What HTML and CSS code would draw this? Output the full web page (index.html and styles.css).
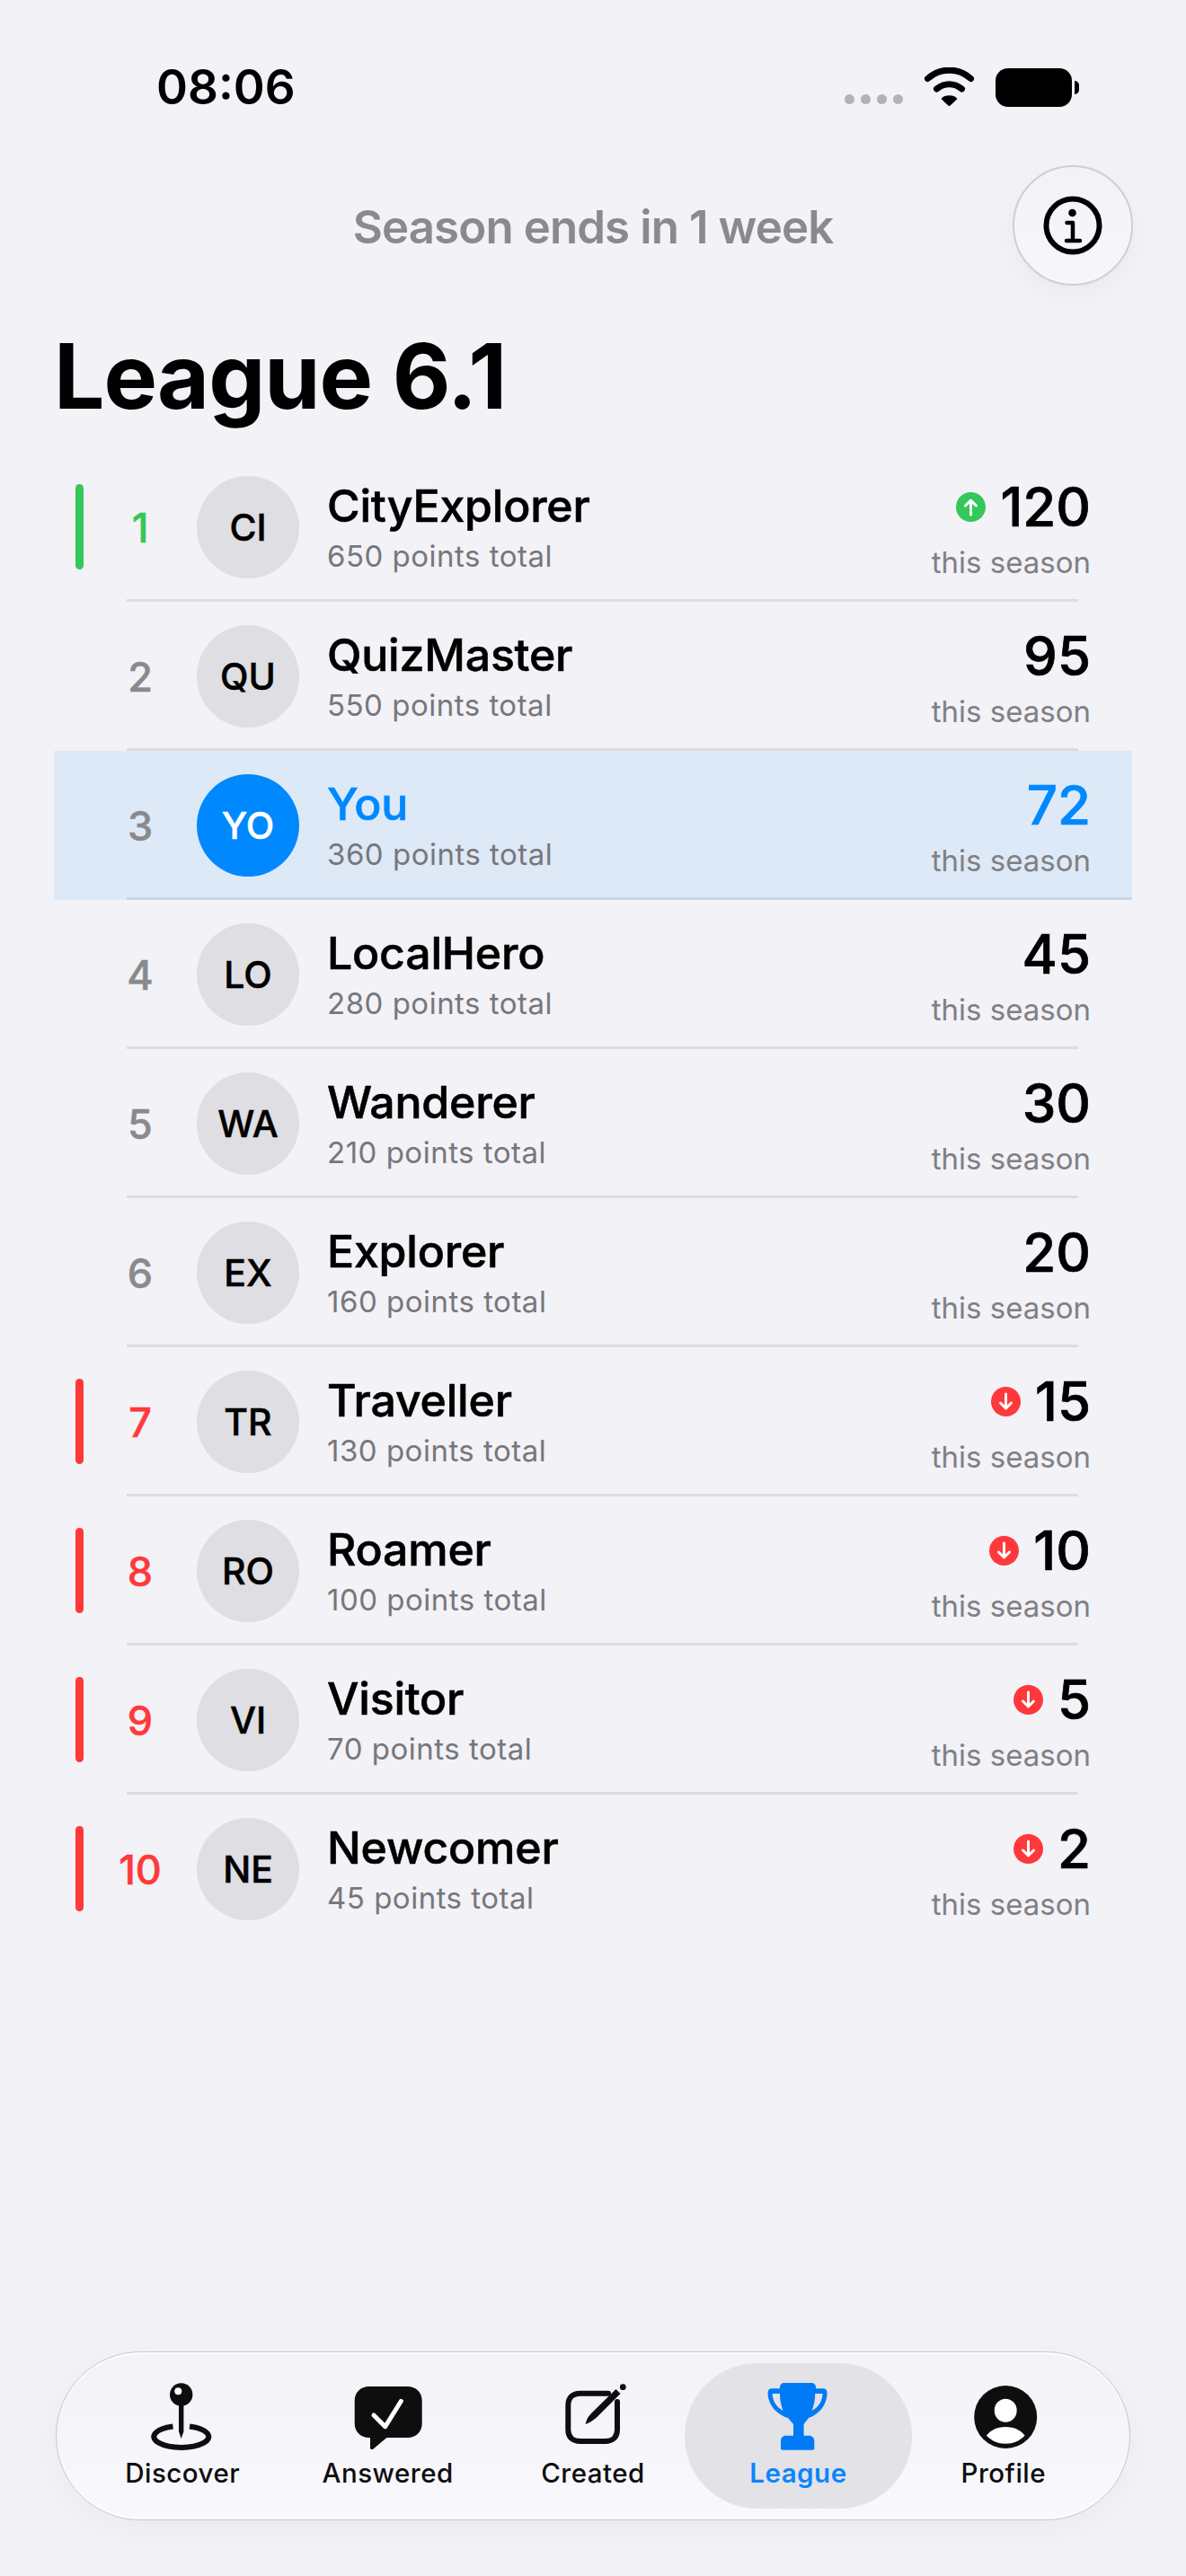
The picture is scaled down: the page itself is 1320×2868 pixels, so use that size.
FILE: index.html
```html
<!DOCTYPE html>
<html lang="en">
<head>
  <meta charset="UTF-8">
  <meta name="viewport" content="width=device-width, initial-scale=1.0">
  <title>League</title>
  <link rel="stylesheet" href="styles.css">
</head>
<body>

<div class="screen">
  <!-- Status bar -->
  <div class="status-bar">
    <span class="clock">08:06</span>
    <div class="status-icons">
      <div class="signal"><i></i><i></i><i></i><i></i></div>
      <svg class="wifi" viewBox="0 0 57 43">
        <path d="M4.500 12.500C18 0 39 0 52.500 12.500" fill="none" stroke="#000" stroke-width="7" stroke-linecap="round"/>
        <path d="M14.500 24C23 17 34 17 42.500 24" fill="none" stroke="#000" stroke-width="7" stroke-linecap="round"/>
        <path d="M28.500 42.500L20.500 35C24 31 33 31 36.500 35Z" fill="#000" stroke="#000" stroke-width="1.500" stroke-linejoin="round"/>
      </svg>
      <div class="battery"></div>
    </div>
  </div>

  <!-- Header -->
  <div class="top-row">
    <span class="season-ends">Season ends in 1 week</span>
    <div class="info-btn">
      <svg viewBox="0 0 66 66" width="66" height="66">
        <circle cx="33" cy="33" r="29.500" fill="none" stroke="#000" stroke-width="6"/>
        <circle cx="32.500" cy="19" r="4.300" fill="#000"/>
        <path d="M26.500 30H33V49M26 50H41" fill="none" stroke="#000" stroke-width="4.500" stroke-linecap="round" stroke-linejoin="round"/>
      </svg>
    </div>
  </div>

  <h1 class="title">League 6.1</h1>

  <!-- Standings -->
  <div class="rows">

    <div class="row promote">
      <div class="rank">1</div>
      <div class="avatar">CI</div>
      <div class="who"><div class="name">CityExplorer</div><div class="total">650 points total</div></div>
      <div class="score">
        <div class="score-line">
          <svg class="trend" viewBox="0 0 33 33"><circle cx="16.500" cy="16.500" r="16.500" fill="#34c759"/><path d="M16.500 25V9M10.500 15L16.500 9L22.500 15" fill="none" stroke="#fff" stroke-width="3" stroke-linecap="round" stroke-linejoin="round"/></svg>
          <span class="points">120</span>
        </div>
        <div class="season">this season</div>
      </div>
    </div>

    <div class="row">
      <div class="rank">2</div>
      <div class="avatar">QU</div>
      <div class="who"><div class="name">QuizMaster</div><div class="total">550 points total</div></div>
      <div class="score">
        <div class="score-line"><span class="points">95</span></div>
        <div class="season">this season</div>
      </div>
    </div>

    <div class="row me">
      <div class="rank">3</div>
      <div class="avatar">YO</div>
      <div class="who"><div class="name">You</div><div class="total">360 points total</div></div>
      <div class="score">
        <div class="score-line"><span class="points">72</span></div>
        <div class="season">this season</div>
      </div>
    </div>

    <div class="row">
      <div class="rank">4</div>
      <div class="avatar">LO</div>
      <div class="who"><div class="name">LocalHero</div><div class="total">280 points total</div></div>
      <div class="score">
        <div class="score-line"><span class="points">45</span></div>
        <div class="season">this season</div>
      </div>
    </div>

    <div class="row">
      <div class="rank">5</div>
      <div class="avatar">WA</div>
      <div class="who"><div class="name">Wanderer</div><div class="total">210 points total</div></div>
      <div class="score">
        <div class="score-line"><span class="points">30</span></div>
        <div class="season">this season</div>
      </div>
    </div>

    <div class="row">
      <div class="rank">6</div>
      <div class="avatar">EX</div>
      <div class="who"><div class="name">Explorer</div><div class="total">160 points total</div></div>
      <div class="score">
        <div class="score-line"><span class="points">20</span></div>
        <div class="season">this season</div>
      </div>
    </div>

    <div class="row relegate">
      <div class="rank">7</div>
      <div class="avatar">TR</div>
      <div class="who"><div class="name">Traveller</div><div class="total">130 points total</div></div>
      <div class="score">
        <div class="score-line">
          <svg class="trend" viewBox="0 0 33 33"><circle cx="16.500" cy="16.500" r="16.500" fill="#ff383c"/><path d="M16.500 8V24M10.500 18L16.500 24L22.500 18" fill="none" stroke="#fff" stroke-width="3" stroke-linecap="round" stroke-linejoin="round"/></svg>
          <span class="points">15</span>
        </div>
        <div class="season">this season</div>
      </div>
    </div>

    <div class="row relegate">
      <div class="rank">8</div>
      <div class="avatar">RO</div>
      <div class="who"><div class="name">Roamer</div><div class="total">100 points total</div></div>
      <div class="score">
        <div class="score-line">
          <svg class="trend" viewBox="0 0 33 33"><circle cx="16.500" cy="16.500" r="16.500" fill="#ff383c"/><path d="M16.500 8V24M10.500 18L16.500 24L22.500 18" fill="none" stroke="#fff" stroke-width="3" stroke-linecap="round" stroke-linejoin="round"/></svg>
          <span class="points">10</span>
        </div>
        <div class="season">this season</div>
      </div>
    </div>

    <div class="row relegate">
      <div class="rank">9</div>
      <div class="avatar">VI</div>
      <div class="who"><div class="name">Visitor</div><div class="total">70 points total</div></div>
      <div class="score">
        <div class="score-line">
          <svg class="trend" viewBox="0 0 33 33"><circle cx="16.500" cy="16.500" r="16.500" fill="#ff383c"/><path d="M16.500 8V24M10.500 18L16.500 24L22.500 18" fill="none" stroke="#fff" stroke-width="3" stroke-linecap="round" stroke-linejoin="round"/></svg>
          <span class="points">5</span>
        </div>
        <div class="season">this season</div>
      </div>
    </div>

    <div class="row relegate last">
      <div class="rank">10</div>
      <div class="avatar">NE</div>
      <div class="who"><div class="name">Newcomer</div><div class="total">45 points total</div></div>
      <div class="score">
        <div class="score-line">
          <svg class="trend" viewBox="0 0 33 33"><circle cx="16.500" cy="16.500" r="16.500" fill="#ff383c"/><path d="M16.500 8V24M10.500 18L16.500 24L22.500 18" fill="none" stroke="#fff" stroke-width="3" stroke-linecap="round" stroke-linejoin="round"/></svg>
          <span class="points">2</span>
        </div>
        <div class="season">this season</div>
      </div>
    </div>

  </div>

  <!-- Tab bar -->
  <div class="tabbar">
    <div class="tab">
      <svg class="tab-icon" viewBox="0 0 76 76">
        <circle cx="36.700" cy="13" r="12.700" fill="#0e0e0f"/>
        <circle cx="33.300" cy="9.300" r="4" fill="#fff"/>
        <path d="M34 24H39.400V54L36.700 62L34 54Z" fill="#0e0e0f"/>
        <path d="M27.500 48.500A30.500 12 0 1 0 46 48.500" fill="none" stroke="#0e0e0f" stroke-width="6"/>
      </svg>
      <span class="tab-label">Discover</span>
    </div>
    <div class="tab">
      <svg class="tab-icon" viewBox="0 0 76 76">
        <path d="M16.700 4H59.700C69 4 75.700 10.500 75.700 20V45C75.700 54.500 69 61 59.700 61H36.400L21.500 73.500C20 74.700 18 74 18 72V61H16.700C7.500 61 .7 54.500 .7 45V20C.7 10.500 7.500 4 16.700 4Z" fill="#0e0e0f"/>
        <path d="M22 36L34.700 48.700L52.400 20.300" fill="none" stroke="#fff" stroke-width="5" stroke-linecap="round" stroke-linejoin="round"/>
      </svg>
      <span class="tab-label">Answered</span>
    </div>
    <div class="tab">
      <svg class="tab-icon" viewBox="0 0 76 76">
        <path d="M55 11.700H24C15 11.700 10.300 16.500 10.300 25V52C10.300 60.500 15 65 24 65H51.500C60 65 65 60.500 65 52V21" fill="none" stroke="#0e0e0f" stroke-width="6" stroke-linecap="round"/>
        <path d="M29.500 46C31 40 33 37 37 33L63.500 7L68.500 12L42 38.500C38 42 35 44 29.500 46Z" fill="#0e0e0f"/>
        <circle cx="71.300" cy="4.700" r="3.400" fill="#0e0e0f"/>
      </svg>
      <span class="tab-label">Created</span>
    </div>
    <div class="tab active">
      <svg class="tab-icon" viewBox="0 0 76 76">
        <path fill-rule="evenodd" fill="#007bf5" d="M18 5C18 2 20 0 23 0H53C56 0 58 2 58 5V6.300H66C69 6.300 70.600 8 70.600 11C70.600 24 62 35 50 39L44.600 46V58.700H50C54 58.700 56.300 61 56.300 65V73C56.300 74 55.500 74.700 54.500 74.700H21C20 74.700 19 74 19 73V65C19 61 21 58.700 25 58.700H33V46L27 39C14 35 4.600 24 4.600 11C4.600 8 6 6.300 9 6.300H18ZM9.600 12H18C18 18 19 24 21.500 31C14 27 10 20 9.600 12ZM65.600 12H57.200C57.200 18 56.200 24 53.700 31C61.200 27 65.200 20 65.600 12Z"/>
      </svg>
      <span class="tab-label">League</span>
    </div>
    <div class="tab">
      <svg class="tab-icon" viewBox="0 0 76 76">
        <circle cx="40.200" cy="38" r="35" fill="#0e0e0f"/>
        <ellipse cx="40.200" cy="30.700" rx="12.500" ry="13" fill="#fff"/>
        <path d="M18.900 58.700C23 53 30 49 40.200 49C50.500 49 57.500 53 61.600 58.700C56 64.500 48.500 67.700 40.200 67.700C32 67.700 24.500 64.500 18.900 58.700Z" fill="#fff"/>
      </svg>
      <span class="tab-label">Profile</span>
    </div>
  </div>
</div>

</body>
</html>
```

FILE: styles.css
```css
* {
  box-sizing: border-box;
}

body {
  margin: 0;
  background-color: #f2f2f7;
  font-family: 'Inter', sans-serif;
  color: #000;
}

.screen {
  height: 2868px;
  padding: 0 60px;
  display: flex;
  flex-direction: column;
}

/* Status bar */
.status-bar {
  height: 184px;
  display: flex;
  justify-content: space-between;
  padding: 67px 67px 0 114px;
}

.clock {
  font-size: 53px;
  font-weight: 600;
  line-height: 60px;
}

.status-icons {
  display: flex;
  align-items: flex-start;
  padding-top: 8px;
}

.signal {
  display: flex;
  gap: 7px;
  margin-top: 30px;
  margin-right: 23px;
}

.signal i {
  width: 11px;
  height: 11px;
  border-radius: 50%;
  background-color: #b3b2b8;
}

.wifi {
  width: 57px;
  height: 43px;
  margin-right: 23px;
}

.battery {
  position: relative;
  width: 85px;
  height: 43px;
  margin-top: 1px;
  background-color: #000;
  border-radius: 14px;
}

.battery::after {
  content: '';
  position: absolute;
  left: 88px;
  top: 14px;
  width: 5px;
  height: 15px;
  background-color: #000;
  border-radius: 0 8px 8px 0;
}

/* Header */
.top-row {
  height: 134px;
  position: relative;
  display: flex;
  align-items: center;
  justify-content: center;
}

.season-ends {
  margin-top: 3px;
  font-size: 51px;
  font-weight: 600;
  letter-spacing: -0.9px;
  color: #8a8a8e;
}

.info-btn {
  position: absolute;
  right: -1px;
  top: 0;
  width: 134px;
  height: 134px;
  border-radius: 50%;
  background: linear-gradient(#f2f2f7, #f6f6fb);
  border: 2px solid #cfcfd3;
  box-shadow: 0 10px 30px rgba(0, 0, 0, 0.04);
  display: flex;
  align-items: center;
  justify-content: center;
}

.title {
  margin: 0;
  height: 186px;
  padding-top: 16px;
  font-size: 100px;
  font-weight: 700;
  line-height: 170px;
  letter-spacing: -1px;
}

/* Rows */
.row {
  position: relative;
  height: 166px;
  padding: 0 50px 0 159px;
  display: flex;
  align-items: center;
}

.row::after {
  content: '';
  position: absolute;
  left: 81px;
  right: 60px;
  bottom: 0;
  height: 3px;
  background-color: #dddce1;
}

.row.last::after {
  display: none;
}

.rank {
  position: absolute;
  left: 66px;
  width: 60px;
  text-align: center;
  font-size: 45px;
  font-weight: 500;
  -webkit-text-stroke: 0.5px;
  color: #8a8a8e;
}

.avatar {
  width: 114px;
  height: 114px;
  border-radius: 50%;
  background-color: #dedee3;
  display: flex;
  align-items: center;
  justify-content: center;
  font-size: 41px;
  font-weight: 500;
  -webkit-text-stroke: 0.5px;
  flex-shrink: 0;
}

.who {
  margin-left: 31px;
  flex: 1;
}

.name {
  font-size: 50px;
  font-weight: 500;
  -webkit-text-stroke: 0.6px;
  line-height: 60px;
  letter-spacing: -0.2px;
}

.total {
  margin-top: 4px;
  font-size: 33px;
  color: #77777b;
  line-height: 44px;
  letter-spacing: 0.5px;
}

.score {
  padding-top: 7px;
  margin-right: -4px;
  text-align: right;
}

.score-line {
  display: flex;
  justify-content: flex-end;
  align-items: center;
  gap: 16px;
  height: 64px;
}

.points {
  font-size: 60px;
  font-weight: 500;
  -webkit-text-stroke: 0.7px;
  line-height: 64px;
}

.trend {
  width: 33px;
  height: 33px;
}

.season {
  margin-top: 7px;
  font-size: 33px;
  color: #808084;
  line-height: 46px;
}

/* Coloured states */
.promote::before,
.relegate::before {
  content: '';
  position: absolute;
  left: 24px;
  top: 35px;
  width: 9px;
  height: 95px;
  border-radius: 5px;
}

.promote::before {
  background-color: #34c759;
}

.relegate::before {
  background-color: #ff383c;
}

.promote .rank {
  color: #34c759;
}

.relegate .rank {
  color: #ff383c;
}

.me {
  background-color: #dde9f7;
}

.me::after {
  background-color: #c9d6e6;
  right: 0;
}

.me .name,
.me .points {
  color: #0088ff;
}

.me .avatar {
  background-color: #0088ff;
  color: #fff;
}

/* Tab bar */
.tabbar {
  position: absolute;
  left: 62px;
  top: 2618px;
  width: 1196px;
  height: 188px;
  padding: 0 26px;
  border-radius: 94px;
  display: flex;
  background: linear-gradient(#f2f2f7, #f8f8fd);
  border: 1px solid #c6c6cb;
  box-shadow: 0 10px 40px rgba(0, 0, 0, 0.04), inset 0 2px 1px #fff, inset 0 -2px 1px #fff;
}

.tab {
  position: relative;
  flex: 1;
  display: flex;
  flex-direction: column;
  align-items: center;
  padding-top: 34px;
}

.tab.active::before {
  content: '';
  position: absolute;
  left: -12px;
  right: -12px;
  top: 12px;
  bottom: 12px;
  border-radius: 81px;
  background-color: #e2e2e7;
}

.tab-icon {
  position: relative;
  width: 76px;
  height: 76px;
}

.tab-label {
  position: relative;
  margin-top: 6px;
  font-size: 29.500px;
  font-weight: 500;
  color: #0e0e0f;
  letter-spacing: 0.5px;
}

.tab.active .tab-label {
  color: #0a84ff;
  font-weight: 600;
}
```
